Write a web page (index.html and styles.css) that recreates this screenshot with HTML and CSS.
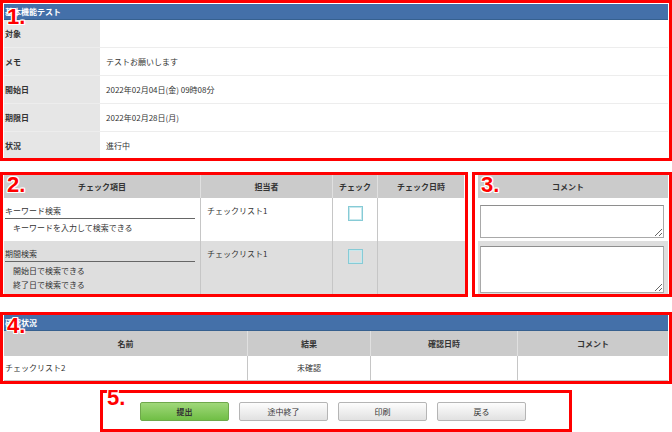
FILE: index.html
```html
<!DOCTYPE html>
<html lang="ja">
<head>
    <meta charset="utf-8">
    <title>基本機能テスト</title>
    <link rel="stylesheet" href="styles.css">
</head>
<body>
    <div class="page">
        <section class="mark mark-info">
            <span class="mark-no">1.</span>
            <div class="mark-body">
                <div class="bar">基本機能テスト</div>
                <div class="info-row"><div class="info-label">対象</div><div class="info-value"></div></div>
                <div class="info-row"><div class="info-label">メモ</div><div class="info-value">テストお願いします</div></div>
                <div class="info-row"><div class="info-label">開始日</div><div class="info-value">2022年02月04日(金) 09時08分</div></div>
                <div class="info-row"><div class="info-label">期限日</div><div class="info-value">2022年02月28日(月)</div></div>
                <div class="info-row"><div class="info-label">状況</div><div class="info-value">進行中</div></div>
            </div>
        </section>

        <div class="check-area">
            <section class="mark mark-check">
                <span class="mark-no">2.</span>
                <div class="mark-body">
                    <div class="check-head">
                        <div class="c-item">チェック項目</div>
                        <div class="c-user">担当者</div>
                        <div class="c-check">チェック</div>
                        <div class="c-date">チェック日時</div>
                    </div>
                    <div class="check-row">
                        <div class="c-item">
                            <div class="item-title">キーワード検索</div>
                            <div class="item-sub">キーワードを入力して検索できる</div>
                        </div>
                        <div class="c-user">チェックリスト1</div>
                        <div class="c-check"><span class="box"></span></div>
                        <div class="c-date"></div>
                    </div>
                    <div class="check-row alt">
                        <div class="c-item">
                            <div class="item-title">期間検索</div>
                            <div class="item-sub">開始日で検索できる</div>
                            <div class="item-sub">終了日で検索できる</div>
                        </div>
                        <div class="c-user">チェックリスト1</div>
                        <div class="c-check"><span class="box"></span></div>
                        <div class="c-date"></div>
                    </div>
                </div>
            </section>

            <section class="mark mark-comment">
                <span class="mark-no">3.</span>
                <div class="mark-body">
                    <div class="comment-head">コメント</div>
                    <div class="comment-row"><textarea class="comment-input"></textarea></div>
                    <div class="comment-row alt"><textarea class="comment-input tall"></textarea></div>
                </div>
            </section>
        </div>

        <section class="mark mark-status">
            <span class="mark-no">4.</span>
            <div class="mark-body">
                <div class="bar">確認状況</div>
                <div class="status-head">
                    <div class="s-name">名前</div>
                    <div class="s-result">結果</div>
                    <div class="s-date">確認日時</div>
                    <div class="s-comment">コメント</div>
                </div>
                <div class="status-row">
                    <div class="s-name">チェックリスト2</div>
                    <div class="s-result">未確認</div>
                    <div class="s-date"></div>
                    <div class="s-comment"></div>
                </div>
            </div>
        </section>

        <section class="mark mark-actions">
            <span class="mark-no">5.</span>
            <div class="actions">
                <button class="btn btn-submit">提出</button>
                <button class="btn">途中終了</button>
                <button class="btn">印刷</button>
                <button class="btn">戻る</button>
            </div>
        </section>
    </div>
</body>
</html>
```

FILE: styles.css
```css
body {
    margin: 0;
    background: #fff;
    font-family: "Noto Sans CJK JP", "Noto Sans", sans-serif;
    font-size: 8px;
    color: #333;
}
.page {
    width: 672px;
}

/* red annotation boxes */
.mark {
    position: relative;
    box-sizing: border-box;
    border: 3px solid #f00;
}
.mark-body {
    height: 100%;
    overflow: hidden;
}
.mark-no {
    position: absolute;
    z-index: 2;
    font-family: "Liberation Sans", Arial, sans-serif;
    font-weight: bold;
    font-size: 22px;
    line-height: 20px;
    color: #f00;
    text-shadow: 1px 0 #fff, -1px 0 #fff, 0 1px #fff, 0 -1px #fff,
        1px 1px #fff, -1px -1px #fff, 1px -1px #fff, -1px 1px #fff;
}

.bar {
    height: 15px;
    line-height: 15px;
    padding-left: 1px;
    background: #4470a9;
    border-bottom: 1px solid #36608f;
    color: #fff;
    font-weight: bold;
}

/* 1. info */
.mark-info {
    height: 161px;
    padding: 1px 1px 0;
}
.mark-info .mark-no { top: 4px; left: 4px; }
.info-row {
    display: flex;
    height: 27px;
    line-height: 27px;
    border-bottom: 1px solid #ededed;
}
.info-label {
    width: 96px;
    padding-left: 1px;
    box-sizing: border-box;
    background: #e6e6e6;
    font-weight: bold;
}
.info-value {
    flex: 1;
    padding-left: 6px;
}

/* 2. / 3. */
.check-area {
    display: flex;
    gap: 4px;
    margin-top: 11px;
}
.mark-check {
    width: 468px;
    height: 125px;
    padding-left: 1px;
}
.mark-check .mark-no { top: 0; left: 4px; }
.check-head,
.check-row {
    display: flex;
}
.check-head > div,
.check-row > div {
    box-sizing: border-box;
    border-right: 1px solid #c6c6c6;
}
.check-head > div {
    height: 23px;
    line-height: 23px;
    background: #cbcbcb;
    border-right-color: #e0e0e0;
    text-align: center;
    font-weight: bold;
}
.check-head > div:last-child,
.check-row > div:last-child {
    border-right: none;
}
.check-row {
    height: 43px;
    line-height: 13px;
}
.check-row.alt {
    height: 60px;
    background: #dedede;
}
.c-item { width: 197px; }
.c-user { width: 132px; }
.c-check { width: 45px; }
.c-date { width: 86px; }
.check-row .c-item {
    padding: 6px 5px 0 1px;
}
.item-title {
    padding-bottom: 1px;
    border-bottom: 1px solid #666;
}
.item-title + .item-sub {
    padding-top: 2px;
}
.item-sub {
    padding-left: 8px;
    line-height: 14px;
}
.check-row .c-user {
    padding: 6px 0 0 6px;
}
.check-row .c-check {
    display: flex;
    justify-content: center;
    padding-top: 8px;
}
.box {
    width: 15px;
    height: 15px;
    box-sizing: border-box;
    border: 1px solid #86cbd6;
    box-shadow: inset 0 0 0 1px #c8e8ed;
    background: #fff;
}
.alt .box {
    background: transparent;
}

.mark-comment {
    width: 200px;
    height: 125px;
    padding: 0 1px 0 3px;
}
.mark-comment .mark-no { top: 0; left: 6px; }
.comment-head {
    height: 23px;
    line-height: 23px;
    padding-right: 10px;
    background: #cbcbcb;
    text-align: center;
    font-weight: bold;
}
.comment-row {
    height: 43px;
    padding: 7px 3px 0 2px;
    box-sizing: border-box;
}
.comment-row.alt {
    height: 60px;
    padding-top: 5px;
    background: #dedede;
}
.comment-input {
    display: block;
    width: 184px;
    height: 33px;
    margin: 0;
    padding: 0;
    box-sizing: border-box;
    border: 1px solid #a9a9a9;
    border-top-color: #8e8e8e;
    border-radius: 0;
    background: #fff;
}
.comment-input.tall {
    height: 47px;
}

/* 4. status */
.mark-status {
    height: 72px;
    margin-top: 15px;
    padding: 0 1px;
}
.mark-status .mark-no { top: 1px; left: 4px; }
.status-head,
.status-row {
    display: flex;
}
.status-head > div,
.status-row > div {
    box-sizing: border-box;
    border-right: 1px solid #c6c6c6;
}
.status-head > div:last-child,
.status-row > div:last-child {
    border-right: none;
}
.status-head > div {
    height: 25px;
    line-height: 25px;
    background: #cbcbcb;
    border-right-color: #e0e0e0;
    text-align: center;
    font-weight: bold;
}
.status-row {
    height: 25px;
    line-height: 24px;
    border-bottom: 1px solid #c6c6c6;
    box-sizing: border-box;
}
.status-row .s-name { padding-left: 1px; }
.status-row .s-result { text-align: center; }
.s-name { width: 244px; }
.s-result { width: 123px; }
.s-date { width: 147px; }
.s-comment { width: 150px; }

/* 5. buttons */
.mark-actions {
    width: 472px;
    height: 42px;
    margin: 6px 0 0 100px;
}
.mark-actions .mark-no { top: -5px; left: 4px; }
.actions {
    display: flex;
    gap: 10px;
    padding: 9px 0 0 37px;
}
.btn {
    width: 89px;
    height: 19px;
    padding: 0;
    border: 1px solid #b5b5b5;
    border-radius: 2px;
    background: linear-gradient(#fdfdfd, #e1e1e1);
    font-family: "Noto Sans CJK JP", "Noto Sans", sans-serif;
    font-size: 8px;
    color: #333;
}
.btn-submit {
    border-color: #6fa84c;
    background: linear-gradient(#a0d87a, #70be45);
    font-weight: bold;
}
```
